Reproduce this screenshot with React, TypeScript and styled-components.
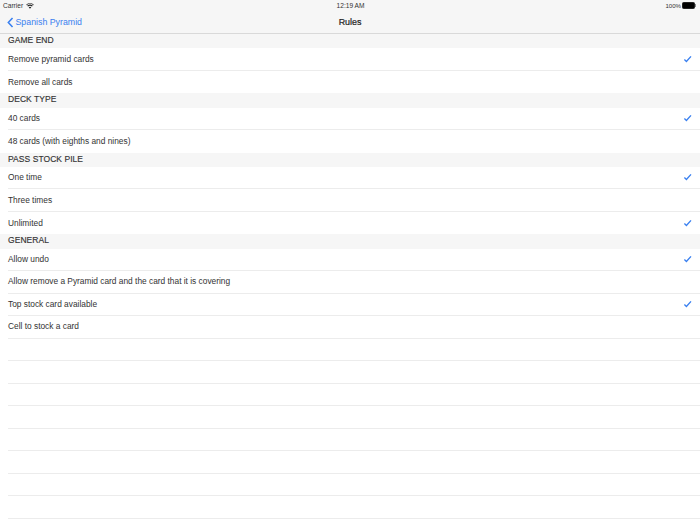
import React from "react";
import styled, { createGlobalStyle } from "styled-components";

const GlobalStyle = createGlobalStyle`
  html, body {
    margin: 0;
    padding: 0;
    background: #fff;
  }
  body {
    font-family: "Liberation Sans", Arial, sans-serif;
  }
`;

const Page = styled.div`
  width: 700px;
  height: 525px;
  overflow: hidden;
  background: #fff;
  display: flex;
  flex-direction: column;
`;

const Header = styled.header`
  height: 33px;
  flex: none;
  background: #f6f6f6;
  border-bottom: 1px solid #d9d9d9;
  display: flex;
  flex-direction: column;
`;

const StatusBar = styled.div`
  height: 11px;
  flex: none;
  padding: 0 3px;
  display: grid;
  grid-template-columns: 1fr auto 1fr;
  align-items: center;
  font-size: 6.6px;
  color: #333;
`;

const StatusLeft = styled.div`
  display: flex;
  align-items: center;
  gap: 3px;
`;

const StatusRight = styled.div`
  display: flex;
  align-items: center;
  justify-content: flex-end;
  gap: 1px;
  font-size: 6.1px;
`;

const Clock = styled.span`
  font-weight: 500;
  padding-left: 1px;
`;

const Battery = styled.div`
  width: 11px;
  height: 5px;
  border: 0.5px solid #222;
  border-radius: 1.5px;
  background: #000;
  position: relative;
  margin-right: 2px;
  &::after {
    content: "";
    position: absolute;
    right: -2px;
    top: 1px;
    width: 1px;
    height: 3px;
    background: #888;
  }
`;

const NavBar = styled.nav`
  flex: 1;
  display: grid;
  grid-template-columns: 1fr auto 1fr;
  align-items: center;
  padding: 0 7px;
`;

const BackLink = styled.div`
  display: flex;
  align-items: center;
  gap: 2px;
  color: #3a80f0;
  font-size: 8.8px;
`;

const NavTitle = styled.div`
  font-size: 8.9px;
  font-weight: 500;
  color: #222;
  -webkit-text-stroke: 0.2px #222;
`;

const SectionTitle = styled.div`
  height: 14.25px;
  box-sizing: border-box;
  flex: none;
  padding-left: 8px;
  background: #f6f6f6;
  color: #333;
  font-size: 8.5px;
  line-height: 13.5px;
  font-weight: 500;
  letter-spacing: 0.05px;
  -webkit-text-stroke: 0.15px #333;
`;

const Row = styled.div<{ $last?: boolean }>`
  height: 22.5px;
  flex: none;
  margin-left: 8px;
  box-sizing: border-box;
  padding: 0 8px 1px 0;
  display: flex;
  align-items: center;
  justify-content: space-between;
  font-size: 8.35px;
  color: #333;
  border-bottom: ${(p) => (p.$last ? "none" : "1px solid #ececec")};
`;

const Check = () => (
  <svg width="9" height="8" viewBox="0 0 9 8">
    <path d="M1.4 4.6 L3.4 6.4 L8 1.4" fill="none" stroke="#3a80f0" strokeWidth="1.4" />
  </svg>
);

const Wifi = () => (
  <svg width="8" height="6" viewBox="0 0 9 7">
    <path d="M4.5 6.6 L3 5 A2.2 2.2 0 0 1 6 5 Z M2.2 4.2 L1.2 3.2 A4.8 4.8 0 0 1 7.8 3.2 L6.8 4.2 A3.4 3.4 0 0 0 2.2 4.2 Z M0.6 2.5 L0 1.9 A6.6 6.6 0 0 1 9 1.9 L8.4 2.5 A5.8 5.8 0 0 0 0.6 2.5 Z" fill="#222" />
  </svg>
);

const Chevron = () => (
  <svg width="6.5" height="11" viewBox="0 0 7 12">
    <path d="M6 1 L1.4 6 L6 11" fill="none" stroke="#3a80f0" strokeWidth="1.7" />
  </svg>
);

const SECTIONS = [
  {
    title: "GAME END",
    last: true,
    rows: [
      { label: "Remove pyramid cards", on: true },
      { label: "Remove all cards" },
    ],
  },
  {
    title: "DECK TYPE",
    last: true,
    rows: [
      { label: "40 cards", on: true },
      { label: "48 cards (with eighths and nines)" },
    ],
  },
  {
    title: "PASS STOCK PILE",
    last: true,
    rows: [
      { label: "One time", on: true },
      { label: "Three times" },
      { label: "Unlimited", on: true },
    ],
  },
  {
    title: "GENERAL",
    last: false,
    rows: [
      { label: "Allow undo", on: true },
      { label: "Allow remove a Pyramid card and the card that it is covering" },
      { label: "Top stock card available", on: true },
      { label: "Cell to stock a card" },
    ],
  },
];

const EMPTY_ROWS = Array.from({ length: 8 }, (_, i) => i);

export default function App() {
  return (
    <Page>
      <GlobalStyle />
      <Header>
        <StatusBar>
          <StatusLeft>
            Carrier <Wifi />
          </StatusLeft>
          <Clock>12:19 AM</Clock>
          <StatusRight>
            100% <Battery />
          </StatusRight>
        </StatusBar>
        <NavBar>
          <BackLink>
            <Chevron />
            Spanish Pyramid
          </BackLink>
          <NavTitle>Rules</NavTitle>
        </NavBar>
      </Header>
      {SECTIONS.map((s) => (
        <React.Fragment key={s.title}>
          <SectionTitle>{s.title}</SectionTitle>
          {s.rows.map((r, i) => (
            <Row key={r.label} $last={s.last && i === s.rows.length - 1}>
              {r.label}
              {r.on && <Check />}
            </Row>
          ))}
        </React.Fragment>
      ))}
      {EMPTY_ROWS.map((i) => (
        <Row key={i} />
      ))}
    </Page>
  );
}
